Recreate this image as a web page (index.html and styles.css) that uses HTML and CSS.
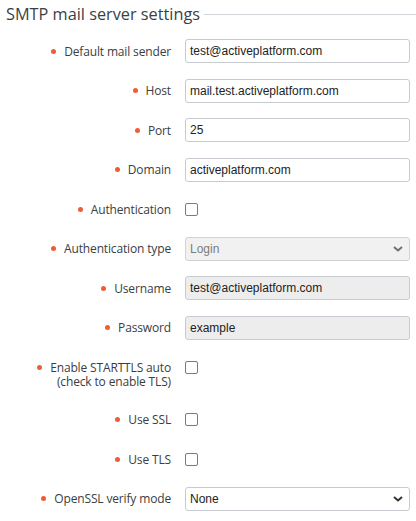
FILE: index.html
```html
<!DOCTYPE html>
<html>
<head>
<meta charset="utf-8">
<link rel="stylesheet" href="styles.css">
</head>
<body>
<div class="panel">
  <div class="legend">
    <span class="legend-title">SMTP mail server settings</span>
    <span class="legend-line"></span>
  </div>
  <div class="form">
    <div class="row">
      <label class="label"><span class="dot"></span>Default mail sender</label>
      <div class="control"><div class="input">test@activeplatform.com</div></div>
    </div>
    <div class="row">
      <label class="label"><span class="dot"></span>Host</label>
      <div class="control"><div class="input">mail.test.activeplatform.com</div></div>
    </div>
    <div class="row">
      <label class="label"><span class="dot"></span>Port</label>
      <div class="control"><div class="input">25</div></div>
    </div>
    <div class="row">
      <label class="label"><span class="dot"></span>Domain</label>
      <div class="control"><div class="input">activeplatform.com</div></div>
    </div>
    <div class="row">
      <label class="label"><span class="dot"></span>Authentication</label>
      <div class="control"><span class="check"></span></div>
    </div>
    <div class="row">
      <label class="label"><span class="dot"></span>Authentication type</label>
      <div class="control"><div class="input select disabled">Login<svg class="chev" width="10" height="6" viewBox="0 0 10 6"><path d="M1 1l4 3.5L9 1" fill="none" stroke="currentColor" stroke-width="2"/></svg></div></div>
    </div>
    <div class="row">
      <label class="label"><span class="dot"></span>Username</label>
      <div class="control"><div class="input readonly">test@activeplatform.com</div></div>
    </div>
    <div class="row">
      <label class="label"><span class="dot"></span>Password</label>
      <div class="control"><div class="input readonly">example</div></div>
    </div>
    <div class="row tall">
      <label class="label"><span class="line"><span class="dot"></span>Enable STARTTLS auto</span><span class="line">(check to enable TLS)</span></label>
      <div class="control"><span class="check"></span></div>
    </div>
    <div class="row">
      <label class="label"><span class="dot"></span>Use SSL</label>
      <div class="control"><span class="check"></span></div>
    </div>
    <div class="row">
      <label class="label"><span class="dot"></span>Use TLS</label>
      <div class="control"><span class="check"></span></div>
    </div>
    <div class="row">
      <label class="label"><span class="dot"></span>OpenSSL verify mode</label>
      <div class="control"><div class="input select">None<svg class="chev" width="10" height="6" viewBox="0 0 10 6"><path d="M1 1l4 3.5L9 1" fill="none" stroke="currentColor" stroke-width="2"/></svg></div></div>
    </div>
  </div>
</div>
</body>
</html>
```
FILE: styles.css
```css
html, body {
  margin: 0;
  padding: 0;
  background: #ffffff;
}
body {
  font-family: "Open Sans", "Noto Sans", sans-serif;
  color: #333;
}
.panel {
  padding: 0 6px 0 6px;
}
.legend {
  display: flex;
  align-items: center;
  height: 28px;
}
.legend-title {
  font-size: 16.3px;
  color: #3b3f45;
  padding-right: 4px;
  line-height: 28px;
}
.legend-line {
  flex: 1;
  height: 1px;
  background: #d3d6da;
  margin-right: -6px;
}
.form {
  display: flex;
  flex-direction: column;
  gap: 15.5px;
  padding-top: 11.3px;
}
.row {
  display: flex;
  align-items: flex-start;
}
.label {
  width: 165px;
  flex: none;
  text-align: right;
  font-size: 12px;
  letter-spacing: -0.15px;
  line-height: 15px;
  color: #3a3d42;
  padding-top: 4.5px;
}
.line {
  display: block;
  height: 14.7px;
}
.tall .label {
  padding-bottom: 3px;
}
.dot {
  display: inline-block;
  width: 5px;
  height: 5px;
  border-radius: 50%;
  background: #ef5d35;
  margin-right: 8px;
  vertical-align: 2px;
}
.control {
  flex: 1;
  margin-left: 14px;
  display: flex;
  align-items: center;
  height: 24px;
}
.input {
  box-sizing: border-box;
  width: 225px;
  height: 24px;
  border: 1px solid #c7cbd1;
  border-radius: 3px;
  font-family: "Liberation Sans", Arial, sans-serif;
  font-size: 12px;
  color: #222;
  padding: 0 0 0 4px;
  line-height: 22px;
  background: #fff;
  display: flex;
  align-items: center;
}
.readonly {
  background: #ededed;
}
.select {
  justify-content: space-between;
  padding-right: 6px;
}
.disabled {
  background: #f1f1f1;
  color: #7a7d80;
  border-color: #cfd2d6;
}
.chev {
  color: #2f3338;
}
.disabled .chev {
  color: #6b7078;
}
.check {
  display: block;
  box-sizing: border-box;
  width: 13px;
  height: 13px;
  border: 1px solid #7b7b7b;
  border-radius: 2px;
  background: #fff;
}
```
